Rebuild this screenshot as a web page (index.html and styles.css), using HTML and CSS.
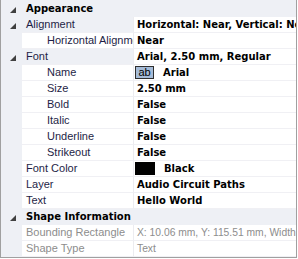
FILE: index.html
```html
<!DOCTYPE html>
<html lang="en">
<head>
    <meta charset="UTF-8">
    <title>Properties</title>
    <link rel="stylesheet" href="styles.css">
</head>
<body>

    <div class="grid">
        <div class="row cat">
            <span class="glyph"></span><span class="cat-name">Appearance</span>
        </div>
        <div class="row parent">
            <span class="glyph"></span>
            <span class="name">Alignment</span>
            <span class="value">Horizontal: Near, Vertical: Near</span>
        </div>
        <div class="row">
            <span class="gutter"></span>
            <span class="name child">Horizontal Alignment</span>
            <span class="value">Near</span>
        </div>
        <div class="row parent">
            <span class="glyph"></span>
            <span class="name">Font</span>
            <span class="value">Arial, 2.50 mm, Regular</span>
        </div>
        <div class="row">
            <span class="gutter"></span>
            <span class="name child">Name</span>
            <span class="value"><span class="font-swatch">ab</span>Arial</span>
        </div>
        <div class="row">
            <span class="gutter"></span>
            <span class="name child">Size</span>
            <span class="value">2.50 mm</span>
        </div>
        <div class="row">
            <span class="gutter"></span>
            <span class="name child">Bold</span>
            <span class="value">False</span>
        </div>
        <div class="row">
            <span class="gutter"></span>
            <span class="name child">Italic</span>
            <span class="value">False</span>
        </div>
        <div class="row">
            <span class="gutter"></span>
            <span class="name child">Underline</span>
            <span class="value">False</span>
        </div>
        <div class="row">
            <span class="gutter"></span>
            <span class="name child">Strikeout</span>
            <span class="value">False</span>
        </div>
        <div class="row">
            <span class="gutter"></span>
            <span class="name">Font Color</span>
            <span class="value"><span class="color-swatch"></span>Black</span>
        </div>
        <div class="row">
            <span class="gutter"></span>
            <span class="name">Layer</span>
            <span class="value">Audio Circuit Paths</span>
        </div>
        <div class="row">
            <span class="gutter"></span>
            <span class="name">Text</span>
            <span class="value">Hello World</span>
        </div>
        <div class="row cat">
            <span class="glyph"></span><span class="cat-name">Shape Information</span>
        </div>
        <div class="row readonly">
            <span class="gutter"></span>
            <span class="name">Bounding Rectangle</span>
            <span class="value">X: 10.06 mm, Y: 115.51 mm, Width: 20.00 mm</span>
        </div>
        <div class="row readonly">
            <span class="gutter"></span>
            <span class="name">Shape Type</span>
            <span class="value">Text</span>
        </div>
    </div>

</body>
</html>
```

FILE: styles.css
```css
body {
    margin: 0;
    background: #ffffff;
    font-family: "Liberation Sans", Arial, sans-serif;
    font-size: 11px;
}

.grid {
    width: 295px;
    padding-top: 1px;
    border: 1px solid #a0a0a0;
    border-top: none;
    background: #eef0f5;
    overflow: hidden;
}

.row {
    display: flex;
    height: 16px;
    line-height: 15px;
    white-space: nowrap;
}

.glyph,
.gutter {
    flex: none;
    width: 21px;
    position: relative;
}

/* expanded triangle, VS style */
.glyph::after {
    content: '';
    position: absolute;
    left: 9px;
    top: 6px;
    border-style: solid;
    border-width: 0 0 6px 6px;
    border-color: transparent transparent #404040 transparent;
}

.cat-name {
    padding-left: 4px;
    font-family: "DejaVu Sans", sans-serif;
    font-size: 10px;
    font-weight: bold;
    color: #000000;
}

.name {
    flex: none;
    width: 107px;
    padding-left: 4px;
    overflow: hidden;
    color: #1e1e46;
    background: #ffffff;
    border-bottom: 1px solid #f0f0f4;
    border-right: 1px solid #ececf0;
}

.parent .name {
    background: #eef0f5;
}

.name.child {
    padding-left: 25px;
    width: 86px;
}

.value {
    flex: 1;
    padding-left: 3px;
    overflow: hidden;
    font-family: "DejaVu Sans", sans-serif;
    font-size: 10px;
    font-weight: bold;
    color: #000000;
    background: #ffffff;
    border-bottom: 1px solid #f0f0f4;
    display: flex;
    align-items: center;
}

.font-swatch {
    display: inline-block;
    width: 17px;
    height: 11px;
    line-height: 11px;
    margin-left: -2px;
    margin-right: 9px;
    border: 1px solid #2e2e2e;
    background: #a6bcd8;
    font-family: "Liberation Sans", Arial, sans-serif;
    font-weight: normal;
    text-align: center;
    font-size: 11px;
}

.color-swatch {
    display: inline-block;
    width: 20px;
    height: 13px;
    margin-left: -2px;
    margin-right: 9px;
    background: #000000;
}

.readonly .name,
.readonly .value {
    color: #8d8d8d;
    font-weight: normal;
}

.readonly .value {
    font-family: "Liberation Sans", Arial, sans-serif;
    font-size: 10.3px;
}
```
